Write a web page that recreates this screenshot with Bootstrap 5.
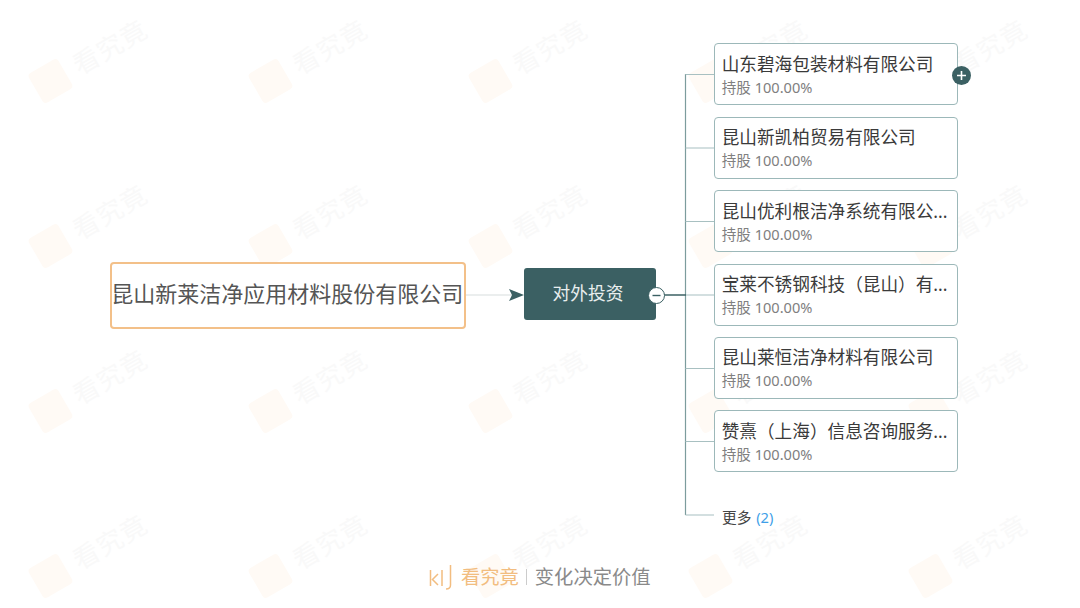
<!DOCTYPE html>
<html lang="zh-CN">
<head>
<meta charset="utf-8">
<title>对外投资</title>
<link href="https://cdn.jsdelivr.net/npm/bootstrap@5.3.0/dist/css/bootstrap.min.css" rel="stylesheet">
<style>
html,body{margin:0;height:100%;background:#fff;overflow:hidden}
body{font-family:"Noto Sans","Noto Sans CJK SC",sans-serif;color:#333}
.stage{position:relative;width:1080px;height:608px;overflow:hidden}
.wm-layer{position:absolute;inset:0;display:grid;grid-template-columns:repeat(5,220px);grid-auto-rows:165px}
.wm-tile{position:relative}
.wm-in{position:absolute;left:37px;top:63px;display:flex;align-items:center;gap:11px;transform:rotate(-30deg);transform-origin:17px 24px;white-space:nowrap}
.wm-logo{width:34px;height:34px;border-radius:4px;background:#fffaf5;flex:none}
.wm-text{font-size:26px;letter-spacing:1px;color:#f9f9f9;line-height:34px}
.links{position:absolute;left:0;top:0}
.root-node{position:absolute;left:109.5px;top:261.5px;width:356.5px;height:67px;border:2px solid #f3c089;border-radius:4px;background:#fff;font-size:22px;color:#555;white-space:nowrap;line-height:1;padding:0 1px 4px 0}
.inv-node{position:absolute;left:524px;top:268px;width:132px;height:52px;border-radius:3px;background:#3b6063;color:#e8eeee;font-size:17.7px;padding:0 4px 2px 0}
.toggle{position:absolute;border-radius:50%;display:flex;align-items:center;justify-content:center}
.t-minus{left:647.5px;top:286.5px;width:17px;height:17px;background:#fff;border:1.5px solid #3b6063}
.t-plus{left:952px;top:65.5px;width:19px;height:19px;background:#3b6063}
.co-col{position:absolute;left:714px;top:43.4px;width:244px;display:flex;flex-direction:column;gap:11.4px}
.co-card{height:62px;border:1.5px solid #9cb8b9;border-radius:4px;background:#fff;padding:0 6.7px;display:flex;flex-direction:column;justify-content:center}
.co-name{font-size:17.65px;line-height:24px;color:#3a3a3a;white-space:nowrap}
.co-sub{font-size:14.6px;line-height:20px;color:#808080;margin-top:1px}
.more-row{position:absolute;left:722px;top:507px;font-size:14.7px;line-height:21px;color:#444}
.more-n{color:#3f9fe8;margin-left:1px}
.foot{position:absolute;left:429px;top:562px;display:flex;align-items:center;height:30px;font-size:19.3px;line-height:30px;white-space:nowrap}
.foot-brand{color:#f2bd80;margin-left:9px}
.foot-sep{width:1px;height:16px;background:#ccc;margin:0 8px 0 7px}
.foot-slogan{color:#8a8a8a}
</style>
</head>
<body>
<div class="stage">
  <div class="wm-layer">
    <div class="wm-tile"><div class="wm-in"><span class="wm-logo"></span><span class="wm-text">看究竟</span></div></div>
    <div class="wm-tile"><div class="wm-in"><span class="wm-logo"></span><span class="wm-text">看究竟</span></div></div>
    <div class="wm-tile"><div class="wm-in"><span class="wm-logo"></span><span class="wm-text">看究竟</span></div></div>
    <div class="wm-tile"><div class="wm-in"><span class="wm-logo"></span><span class="wm-text">看究竟</span></div></div>
    <div class="wm-tile"><div class="wm-in"><span class="wm-logo"></span><span class="wm-text">看究竟</span></div></div>
    <div class="wm-tile"><div class="wm-in"><span class="wm-logo"></span><span class="wm-text">看究竟</span></div></div>
    <div class="wm-tile"><div class="wm-in"><span class="wm-logo"></span><span class="wm-text">看究竟</span></div></div>
    <div class="wm-tile"><div class="wm-in"><span class="wm-logo"></span><span class="wm-text">看究竟</span></div></div>
    <div class="wm-tile"><div class="wm-in"><span class="wm-logo"></span><span class="wm-text">看究竟</span></div></div>
    <div class="wm-tile"><div class="wm-in"><span class="wm-logo"></span><span class="wm-text">看究竟</span></div></div>
    <div class="wm-tile"><div class="wm-in"><span class="wm-logo"></span><span class="wm-text">看究竟</span></div></div>
    <div class="wm-tile"><div class="wm-in"><span class="wm-logo"></span><span class="wm-text">看究竟</span></div></div>
    <div class="wm-tile"><div class="wm-in"><span class="wm-logo"></span><span class="wm-text">看究竟</span></div></div>
    <div class="wm-tile"><div class="wm-in"><span class="wm-logo"></span><span class="wm-text">看究竟</span></div></div>
    <div class="wm-tile"><div class="wm-in"><span class="wm-logo"></span><span class="wm-text">看究竟</span></div></div>
    <div class="wm-tile"><div class="wm-in"><span class="wm-logo"></span><span class="wm-text">看究竟</span></div></div>
    <div class="wm-tile"><div class="wm-in"><span class="wm-logo"></span><span class="wm-text">看究竟</span></div></div>
    <div class="wm-tile"><div class="wm-in"><span class="wm-logo"></span><span class="wm-text">看究竟</span></div></div>
    <div class="wm-tile"><div class="wm-in"><span class="wm-logo"></span><span class="wm-text">看究竟</span></div></div>
    <div class="wm-tile"><div class="wm-in"><span class="wm-logo"></span><span class="wm-text">看究竟</span></div></div>
  </div>

  <svg class="links" width="1080" height="608" viewBox="0 0 1080 608" fill="none">
    <path d="M466 295H512" stroke="#e4e8e8" stroke-width="1.5"/>
    <path d="M509 289L524 295L509 301L512 295Z" fill="#3b6063"/>
    <path d="M685.5 74V515" stroke="#7c9c9d" stroke-width="1.2"/>
    <path d="M685.5 74.5H714M685.5 148H714M685.5 221.5H714M685.5 295H714M685.5 368.5H714M685.5 441.5H714M685.5 515H714" stroke="#a8c0c1" stroke-width="1.2"/>
    <path d="M664 295H686" stroke="#3b6063" stroke-width="1.5"/>
  </svg>

  <div class="root-node d-flex align-items-center justify-content-center">昆山新莱洁净应用材料股份有限公司</div>
  <div class="inv-node d-flex align-items-center justify-content-center">对外投资</div>
  <div class="toggle t-minus"><svg width="9" height="9" viewBox="0 0 9 9"><path d="M0.5 4.5H8.5" stroke="#3b6063" stroke-width="1.4"/></svg></div>

  <div class="co-col">
    <div class="co-card"><div class="co-name">山东碧海包装材料有限公司</div><div class="co-sub">持股 100.00%</div></div>
    <div class="co-card"><div class="co-name">昆山新凯柏贸易有限公司</div><div class="co-sub">持股 100.00%</div></div>
    <div class="co-card"><div class="co-name">昆山优利根洁净系统有限公...</div><div class="co-sub">持股 100.00%</div></div>
    <div class="co-card"><div class="co-name">宝莱不锈钢科技（昆山）有...</div><div class="co-sub">持股 100.00%</div></div>
    <div class="co-card"><div class="co-name">昆山莱恒洁净材料有限公司</div><div class="co-sub">持股 100.00%</div></div>
    <div class="co-card"><div class="co-name">赞熹（上海）信息咨询服务...</div><div class="co-sub">持股 100.00%</div></div>
  </div>
  <div class="toggle t-plus"><svg width="11" height="11" viewBox="0 0 11 11"><path d="M1 5.5H10M5.5 1V10" stroke="#fff" stroke-width="1.6"/></svg></div>
  <div class="more-row">更多 <span class="more-n">(2)</span></div>

  <div class="foot">
    <svg width="23" height="26" viewBox="0 0 23 26" fill="none" stroke="#f2bd80" stroke-width="1.5"><path d="M1.5 6V22M9 10L3.5 15.5L9 21M13 6V22M21.5 1V21Q21.5 25 17 25"/></svg>
    <span class="foot-brand">看究竟</span><span class="foot-sep"></span><span class="foot-slogan">变化决定价值</span>
  </div>
</div>
<script src="https://cdn.jsdelivr.net/npm/bootstrap@5.3.0/dist/js/bootstrap.bundle.min.js"></script>
</body>
</html>
